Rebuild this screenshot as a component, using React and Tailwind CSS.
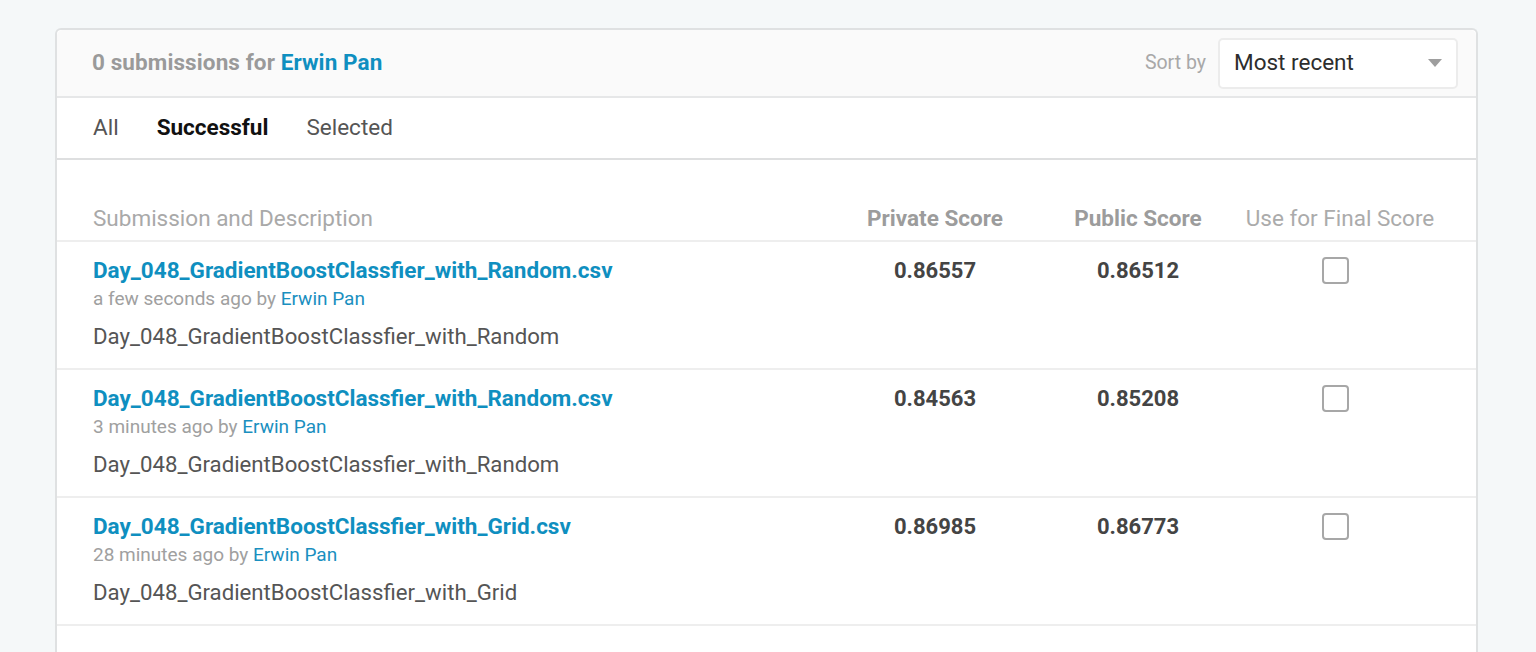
import React from "react";

const rows = [
  {
    file: "Day_048_GradientBoostClassfier_with_Random.csv",
    when: "a few seconds ago",
    desc: "Day_048_GradientBoostClassfier_with_Random",
    priv: "0.86557",
    pub: "0.86512",
  },
  {
    file: "Day_048_GradientBoostClassfier_with_Random.csv",
    when: "3 minutes ago",
    desc: "Day_048_GradientBoostClassfier_with_Random",
    priv: "0.84563",
    pub: "0.85208",
  },
  {
    file: "Day_048_GradientBoostClassfier_with_Grid.csv",
    when: "28 minutes ago",
    desc: "Day_048_GradientBoostClassfier_with_Grid",
    priv: "0.86985",
    pub: "0.86773",
  },
];

export default function App() {
  return (
    <div
      className="h-[652px] overflow-hidden bg-[#f5f8f9] pt-[28px] pl-[55px] pr-[58px]"
      style={{ fontFamily: "Roboto, 'Liberation Sans', sans-serif" }}
    >
      <div className="border-2 border-b-0 border-[#dfe1e2] rounded-t-[6px] bg-white">
        {/* header */}
        <div className="h-[68px] bg-[#fafafa] border-b-2 border-[#e6e7e8] rounded-t-[6px] flex items-center justify-between pl-[35px] pr-[18px]">
          <div className="text-[22.5px] font-bold tracking-[0.1px]">
            <span className="text-[#9a9a9a]">0 submissions for </span>
            <span className="text-[#0f8fc0]">Erwin Pan</span>
          </div>
          <div className="flex items-center gap-[12px]">
            <span className="text-[19.5px] text-[#a8a8a8]">Sort by</span>
            <div className="w-[240px] h-[51px] bg-white border-2 border-[#ececec] rounded-[5px] flex items-center justify-between pl-[14px] pr-[14px]">
              <span className="text-[22.5px] text-[#2d2d2d]">Most recent</span>
              <svg width="14" height="8" viewBox="0 0 14 8">
                <path d="M0 0 L14 0 L7 8 Z" fill="#9e9e9e" />
              </svg>
            </div>
          </div>
        </div>

        {/* tabs */}
        <div className="h-[62px] border-b-2 border-[#dedfe0] flex items-center gap-[38px] pl-[36px] text-[22.5px]">
          <span className="text-[#555]">All</span>
          <span className="text-[#111] font-bold">Successful</span>
          <span className="text-[#555]">Selected</span>
        </div>

        {/* table header */}
        <div className="h-[82px] pt-[42px] border-b-2 border-[#eeeeee] flex items-start pl-[36px] text-[22.5px]">
          <div className="flex-1 text-[#a9a9a9]">Submission and Description</div>
          <div className="w-[216px] pr-[10px] text-center font-bold text-[#9c9c9c]">Private Score</div>
          <div className="w-[190px] pr-[10px] text-center font-bold text-[#9c9c9c]">Public Score</div>
          <div className="w-[204px] text-center text-[#ababab] mr-[34px]">Use for Final Score</div>
        </div>

        {rows.map((r, i) => (
          <div key={i} className="h-[128px] border-b-2 border-[#eeeeee] flex items-start pl-[36px] pt-[14px]">
            <div className="flex-1">
              <div className="text-[22.5px] font-bold text-[#0f8fc0] leading-[29px]">{r.file}</div>
              <div className="text-[19px] text-[#a0a0a0] leading-[28px]">
                {r.when} by <span className="text-[#1a8fbf]">Erwin Pan</span>
              </div>
              <div className="text-[22.2px] text-[#555] leading-[29px] mt-[9px]">{r.desc}</div>
            </div>
            <div className="w-[216px] text-center font-bold text-[22px] text-[#444] leading-[29px]">{r.priv}</div>
            <div className="w-[190px] text-center font-bold text-[22px] text-[#444] leading-[29px]">{r.pub}</div>
            <div className="w-[204px] mr-[39px] flex justify-center pt-[1px]">
              <div className="w-[27px] h-[27px] border-2 border-[#a7a7a7] rounded-[4px] bg-white" />
            </div>
          </div>
        ))}
        <div className="h-[60px]" />
      </div>
    </div>
  );
}
